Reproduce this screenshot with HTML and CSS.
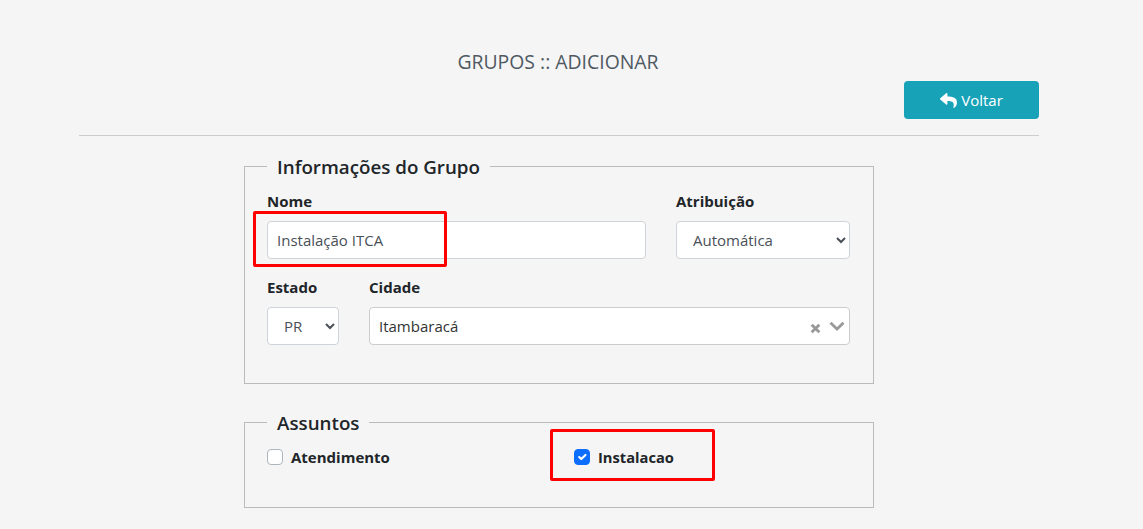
FILE: index.html
```html
<!DOCTYPE html>
<html lang="pt-BR">
<head>
<meta charset="utf-8">
<title>Grupos :: Adicionar</title>
<link rel="stylesheet" href="styles.css">
</head>
<body>
<main class="page">
  <h1 class="title">GRUPOS :: ADICIONAR</h1>
  <div class="actions">
    <a class="btn" href="#">
      <svg class="btn-icon" viewBox="0 0 512 512" aria-hidden="true"><path fill="currentColor" d="M8.3 189.8 184.3 37.8C199.7 24.5 224 35.3 224 56v80.1C384.6 137.9 512 170.1 512 322.3c0 61.4-39.6 122.3-83.3 154.1-13.7 9.9-33.1-2.5-28.1-18.6 45.3-144.8-21.5-183.3-176.6-185.5V360c0 20.7-24.3 31.5-39.7 18.2l-176-152c-11.1-9.6-11.1-26.8 0-36.4z"/></svg>
      Voltar
    </a>
  </div>
  <hr class="rule">
  <form class="form">
    <fieldset class="group group-info">
      <legend>Informações do Grupo</legend>
      <div class="row">
        <div class="field field-nome">
          <label>Nome</label>
          <input class="control" type="text" value="Instalação ITCA">
        </div>
        <div class="field field-attr">
          <label>Atribuição</label>
          <select class="control select"><option>Automática</option></select>
        </div>
      </div>
      <div class="row">
        <div class="field field-uf">
          <label>Estado</label>
          <select class="control select"><option>PR</option></select>
        </div>
        <div class="field field-city">
          <label>Cidade</label>
          <div class="control combo">
            <span>Itambaracá</span>
            <svg class="combo-x" viewBox="0 0 10 10" aria-hidden="true"><path d="M1.5 1.5l7 7M8.500 1.500l-7 7" stroke="#999" stroke-width="2.600" fill="none"/></svg>
            <svg class="combo-caret" viewBox="0 0 16 10" aria-hidden="true"><path d="M1.500 1.800 8 8l6.500-6.200" stroke="#999" stroke-width="2.800" fill="none"/></svg>
          </div>
        </div>
      </div>
    </fieldset>
    <fieldset class="group group-topics">
      <legend>Assuntos</legend>
      <div class="checks">
        <label class="check"><span class="box"></span>Atendimento</label>
        <label class="check check-narrow"><span class="box box-on"><svg viewBox="0 0 20 20" aria-hidden="true"><path d="m6 10 3 3 6-6" fill="none" stroke="#fff" stroke-width="3" stroke-linecap="round" stroke-linejoin="round"/></svg></span>Instalacao</label>
      </div>
    </fieldset>
  </form>
</main>
<div class="mark mark-name"></div>
<div class="mark mark-topic"></div>
</body>
</html>
```
FILE: styles.css
```css
* { box-sizing: border-box; }
html, body { margin: 0; height: 529px; overflow: hidden; }
body {
  background: #f5f5f5;
  color: #212529;
  font-family: "Open Sans", "Noto Sans", sans-serif;
  font-size: 15px;
  position: relative;
}
.page { width: 960px; margin-left: 79px; padding-top: 49px; }
.title {
  margin: 0;
  padding-right: 2px;
  text-align: center;
  font-size: 19.400px;
  font-weight: 400;
  line-height: 26px;
  color: #4f5962;
}
.actions { display: flex; justify-content: flex-end; margin-top: 6px; }
.btn {
  display: flex;
  align-items: center;
  justify-content: center;
  gap: 4px;
  width: 135px;
  height: 38px;
  background: #17a2b8;
  color: #fff;
  border-radius: 4px;
  text-decoration: none;
  font-size: 15px;
}
.btn-icon { width: 17px; height: 17px; }
.rule { margin: 16px 0 0; border: 0; border-top: 1px solid #ccc; }
.form { width: 630px; margin-left: 165px; }
.group {
  margin: 0;
  min-width: 0;
  border: 1px solid #bbb;
  padding: 0 23px 0 22px;
}
.group legend {
  margin-left: 0;
  padding: 0 10px 0;
  font-size: 18.750px;
  font-weight: 600;
  line-height: 24px;
  color: #212529;
  position: relative;
  top: 1px;
}
.group-info { margin-top: 18px; height: 230px; padding-top: 13px; }
.group-topics { margin-top: 26px; height: 98px; }
.row { display: flex; gap: 30px; margin-bottom: 18px; }
.field label { display: block; font-weight: 700; font-size: 15px; line-height: 20px; margin-bottom: 10px; }
.field-nome { width: 379px; }
.field-attr { width: 174px; }
.field-uf { width: 72px; }
.field-city { width: 481px; }
.control {
  display: block;
  width: 100%;
  height: 38px;
  background: #fff;
  border: 1px solid #ced4da;
  border-radius: 4px;
  padding: 0 9px;
  font-family: inherit;
  font-size: 15px;
  color: #495057;
}
.select { padding-left: 12px; }
.combo { display: flex; align-items: center; border-color: #ccc; color: #333; }
.combo span { flex: 1; }
.combo-x { width: 11px; height: 11px; margin-top: 4px; }
.combo-caret { width: 16px; height: 10px; margin-left: 8px; margin-right: -5px; margin-top: -1px; }
.checks { display: grid; grid-template-columns: 307px 1fr; padding-top: 12px; }
.check { display: flex; align-items: center; gap: 8px; font-weight: 700; font-size: 15px; line-height: 22px; }
.check-narrow { font-size: 14.700px; }
.box {
  width: 16px;
  height: 16px;
  background: #fff;
  border: 1px solid #adb5bd;
  border-radius: 4px;
  display: block;
}
.box-on { background: #0d6efd; border-color: #0d6efd; }
.box-on svg { display: block; width: 14px; height: 14px; }
.mark { position: absolute; border: 3px solid #f00; border-radius: 2px; }
.mark-name { left: 253px; top: 211px; width: 194px; height: 56px; }
.mark-topic { left: 550px; top: 429px; width: 165px; height: 52px; }
```
